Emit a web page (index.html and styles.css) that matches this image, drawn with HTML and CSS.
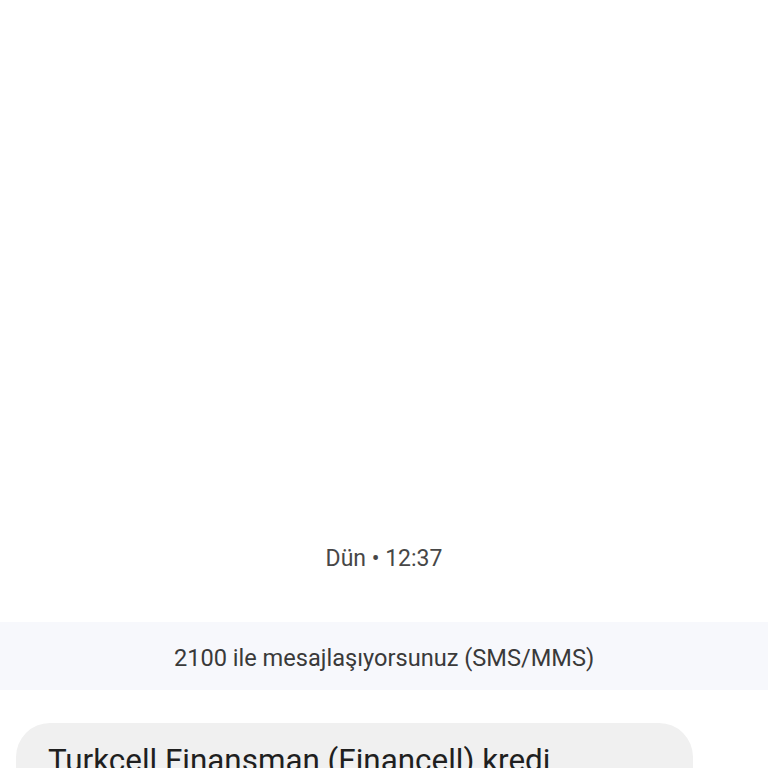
FILE: index.html
```html
<!DOCTYPE html>
<html lang="tr">
<head>
<meta charset="utf-8">
<link rel="stylesheet" href="styles.css">
</head>
<body>
<main class="thread">
  <div class="spacer"></div>
  <div class="stamp">Dün • 12:37</div>
  <div class="notice">2100 ile mesajlaşıyorsunuz (SMS/MMS)</div>
  <div class="bubble">
    <p class="msg">Turkcell Finansman (Financell) kredi</p>
  </div>
</main>
</body>
</html>
```
FILE: styles.css
```css
html, body {
  margin: 0;
  padding: 0;
  background: #ffffff;
  height: 768px;
  overflow: hidden;
}
.thread {
  display: flex;
  flex-direction: column;
  font-family: Roboto, "Noto Sans", sans-serif;
}
.spacer {
  height: 544px;
}
.stamp {
  text-align: center;
  font-size: 23px;
  line-height: 30px;
  color: #474747;
}
.notice {
  margin-top: 48px;
  height: 68px;
  background: #f7f8fc;
  display: flex;
  align-items: center;
  justify-content: center;
  font-size: 23.6px;
  color: #3a3a3a;
  padding-top: 3px;
  box-sizing: border-box;
}
.bubble {
  margin: 33px 0 0 16px;
  width: 677px;
  background: #f0f0f0;
  border-radius: 34px;
  padding: 18px 32px;
  box-sizing: border-box;
  height: 120px;
}
.msg {
  margin: 0;
  font-size: 31.4px;
  line-height: 40px;
  color: #1f1f1f;
}
```
